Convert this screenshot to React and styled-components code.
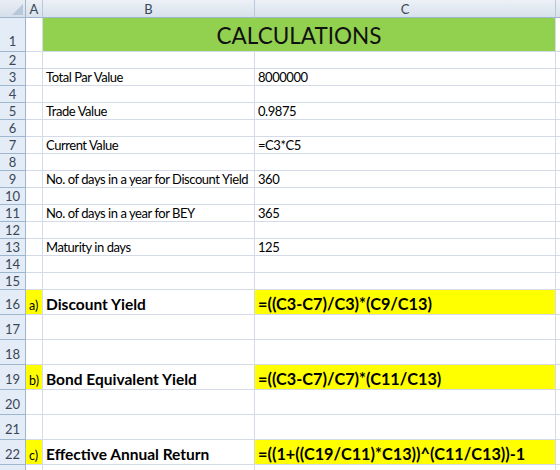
import styled, { createGlobalStyle } from "styled-components";

const GlobalStyle = createGlobalStyle`
  * { box-sizing: border-box; }
  html, body { margin: 0; padding: 0; background: #fff; overflow: hidden; }
  body { font-family: Lato, "Liberation Sans", sans-serif; }
`;

// each row: number, height, label in A, text in B, text in C, bold for the results
const rows = [
  { n: 1, h: 34, title: "CALCULATIONS" },
  { n: 2, h: 17 },
  { n: 3, h: 17, b: "Total Par Value", c: "8000000" },
  { n: 4, h: 17 },
  { n: 5, h: 17, b: "Trade Value", c: "0.9875" },
  { n: 6, h: 17 },
  { n: 7, h: 17, b: "Current Value", c: "=C3*C5" },
  { n: 8, h: 17 },
  { n: 9, h: 17, b: "No. of days in a year for Discount Yield", c: "360" },
  { n: 10, h: 17 },
  { n: 11, h: 17, b: "No. of days in a year for BEY", c: "365" },
  { n: 12, h: 17 },
  { n: 13, h: 17, b: "Maturity in days", c: "125" },
  { n: 14, h: 17 },
  { n: 15, h: 17 },
  { n: 16, h: 25, a: "a)", b: "Discount Yield", c: "=((C3-C7)/C3)*(C9/C13)", bold: true },
  { n: 17, h: 25 },
  { n: 18, h: 25 },
  { n: 19, h: 25, a: "b)", b: "Bond Equivalent Yield", c: "=((C3-C7)/C7)*(C11/C13)", bold: true },
  { n: 20, h: 25 },
  { n: 21, h: 25 },
  { n: 22, h: 25, a: "c)", b: "Effective Annual Return", c: "=((1+((C19/C11)*C13))^(C11/C13))-1", bold: true },
  { n: "", h: 25 },
];

export default function App() {
  return (
    <>
      <GlobalStyle />
      <Sheet>
        <Corner>
          <CornerMark />
        </Corner>
        <ColHead>A</ColHead>
        <ColHead>B</ColHead>
        <ColHead>C</ColHead>
        <ColHead />
        {rows.map((r) => (
          <Row key={r.n} r={r} />
        ))}
      </Sheet>
    </>
  );
}

function Row({ r }) {
  if (r.title) {
    return (
      <>
        <RowHead $h={r.h}>{r.n}</RowHead>
        <Cell $h={r.h} />
        <Title $h={r.h}>{r.title}</Title>
        <Cell $h={r.h} />
      </>
    );
  }
  return (
    <>
      <RowHead $h={r.h}>{r.n}</RowHead>
      <Cell $h={r.h} $fill={r.a ? "#ffff00" : null} $kind="tag">
        {r.a}
      </Cell>
      <Cell $h={r.h} $kind={r.bold ? "label" : null}>
        {r.b}
      </Cell>
      <Cell $h={r.h} $kind={r.bold ? "formula" : null} $fill={r.bold ? "#ffff00" : null}>
        {r.c}
      </Cell>
      <Cell $h={r.h} />
    </>
  );
}

const sizes = { tag: 12.5, label: 15.5, formula: 16.3 };

const Sheet = styled.div`
  display: grid;
  grid-template-columns: 26px 17px 212px 301px 1fr;
  width: 560px;
  height: 470px;
  overflow: hidden;
  align-content: start;
`;

const Corner = styled.div`
  position: relative;
  height: 18px;
  background: linear-gradient(#e9eef5, #d6dfea);
  border-right: 1px solid #9eb6ce;
  border-bottom: 1px solid #9eb6ce;
`;

const CornerMark = styled.div`
  position: absolute;
  right: 2px;
  bottom: 2px;
  width: 0;
  height: 0;
  border-left: 11px solid transparent;
  border-bottom: 11px solid #b8c7d9;
`;

const ColHead = styled.div`
  height: 18px;
  display: flex;
  align-items: center;
  justify-content: center;
  font-size: 13px;
  color: #3a4656;
  background: linear-gradient(#edf1f7, #d8e1ec);
  border-right: 1px solid #b8c9dc;
  border-bottom: 1px solid #9eb6ce;
`;

const RowHead = styled.div`
  height: ${(p) => p.$h}px;
  display: flex;
  align-items: flex-end;
  justify-content: center;
  padding-bottom: ${(p) => (p.$h > 20 ? 2 : 0)}px;
  font-size: 13px;
  color: #3a4656;
  background: #e4ecf7;
  border-right: 1px solid #9eb6ce;
  border-bottom: 1px solid #9eb6ce;
`;

const Cell = styled.div`
  height: ${(p) => p.$h}px;
  display: flex;
  align-items: flex-end;
  padding: 0 2px 0 3px;
  padding-bottom: ${(p) => (p.$kind ? 1 : 0)}px;
  white-space: nowrap;
  overflow: hidden;
  font-size: ${(p) => sizes[p.$kind] || 13}px;
  font-weight: ${(p) => (p.$kind === "label" || p.$kind === "formula" ? 700 : 400)};
  letter-spacing: ${(p) => (p.$kind ? 0 : -0.45)}px;
  color: #000;
  background: ${(p) => p.$fill || "#fff"};
  border-right: 1px solid #d4dbe6;
  border-bottom: 1px solid #d4dbe6;
`;

const Title = styled.div`
  grid-column: span 2;
  height: ${(p) => p.$h}px;
  display: flex;
  align-items: flex-end;
  justify-content: center;
  padding-bottom: 2px;
  font-size: 22.5px;
  color: #111;
  background: #92d050;
  border-right: 1px solid #d4dbe6;
  border-bottom: 1px solid #d4dbe6;
`;
